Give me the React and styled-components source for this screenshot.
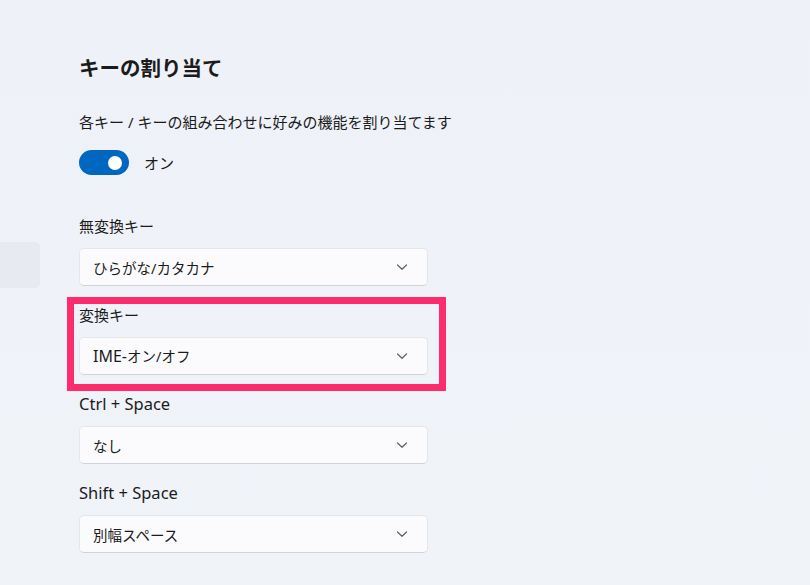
import React from "react";
import styled, { createGlobalStyle } from "styled-components";

const GlobalStyle = createGlobalStyle`
  html, body {
    margin: 0;
    padding: 0;
    background: #eff2f8;
  }
  body {
    font-family: "Noto Sans", "Noto Sans CJK JP", sans-serif;
    color: #1b1b1b;
  }
`;

const Window = styled.div`
  display: flex;
  width: 810px;
  height: 585px;
  background: linear-gradient(180deg, #eef1f7 0%, #f0f3f8 100%);
  overflow: hidden;
`;

const Nav = styled.nav`
  width: 40px;
  flex: none;
  padding-top: 242px;
`;

const NavItem = styled.div`
  height: 46px;
  border-radius: 0 5px 5px 0;
  background: #e7eaf0;
`;

const Content = styled.main`
  margin-left: 39px;
  padding-top: 54px;
  display: flex;
  flex-direction: column;
`;

const Title = styled.h1`
  margin: 0;
  font-size: 20.5px;
  line-height: 28px;
  font-weight: 700;
`;

const Description = styled.p`
  margin: 30px 0 0;
  font-size: 15px;
  line-height: 20px;
`;

const ToggleRow = styled.div`
  display: flex;
  align-items: center;
  gap: 15px;
  margin-top: 18px;
  font-size: 15px;
`;

const Track = styled.div`
  width: 50px;
  height: 25px;
  border-radius: 13px;
  background: #0067c0;
  display: flex;
  align-items: center;
  justify-content: flex-end;
  padding-right: 7px;
  box-sizing: border-box;
`;

const Knob = styled.span`
  width: 14px;
  height: 14px;
  border-radius: 50%;
  background: #ffffff;
`;

const Groups = styled.div`
  display: flex;
  flex-direction: column;
  gap: 19px;
  margin-top: 41px;
  width: 349px;
`;

const Group = styled.div`
  position: relative;
  display: flex;
  flex-direction: column;
  gap: 12px;

  ${({ $marked }) =>
    $marked &&
    `
    &::after {
      content: "";
      position: absolute;
      left: -12px;
      right: -18px;
      top: -8px;
      bottom: -16px;
      border: 7.5px solid #fd2c6c;
      pointer-events: none;
    }
  `}
`;

const Label = styled.div`
  font-size: ${({ $latin }) => ($latin ? "16.5px" : "15px")};
  line-height: 20px;
`;

const Select = styled.div`
  width: 349px;
  height: 38px;
  box-sizing: border-box;
  display: flex;
  align-items: center;
  justify-content: space-between;
  padding: 0 19px 0 13px;
  background: #fbfbfd;
  border: 1px solid #e4e6eb;
  border-bottom-color: #cfd2d8;
  border-radius: 5px;
  font-size: 14.5px;
`;

const Latin = styled.span`
  font-size: 16px;
`;

const Chevron = () => (
  <svg width="12" height="12" viewBox="0 0 12 12" aria-hidden="true">
    <path
      d="M1.5 4 L6 8.3 L10.5 4"
      fill="none"
      stroke="#5c6068"
      strokeWidth="1.2"
      strokeLinecap="round"
      strokeLinejoin="round"
    />
  </svg>
);

const keys = [
  { label: "無変換キー", value: "ひらがな/カタカナ" },
  { label: "変換キー", prefix: "IME-", value: "オン/オフ", marked: true },
  { label: "Ctrl + Space", latin: true, value: "なし" },
  { label: "Shift + Space", latin: true, value: "別幅スペース" },
];

export default function App() {
  return (
    <Window>
      <GlobalStyle />
      <Nav>
        <NavItem />
      </Nav>
      <Content>
        <Title>キーの割り当て</Title>
        <Description>各キー / キーの組み合わせに好みの機能を割り当てます</Description>
        <ToggleRow>
          <Track>
            <Knob />
          </Track>
          オン
        </ToggleRow>
        <Groups>
          {keys.map((k) => (
            <Group key={k.label} $marked={k.marked}>
              <Label $latin={k.latin}>{k.label}</Label>
              <Select>
                <span>
                  {k.prefix && <Latin>{k.prefix}</Latin>}
                  {k.value}
                </span>
                <Chevron />
              </Select>
            </Group>
          ))}
        </Groups>
      </Content>
    </Window>
  );
}
